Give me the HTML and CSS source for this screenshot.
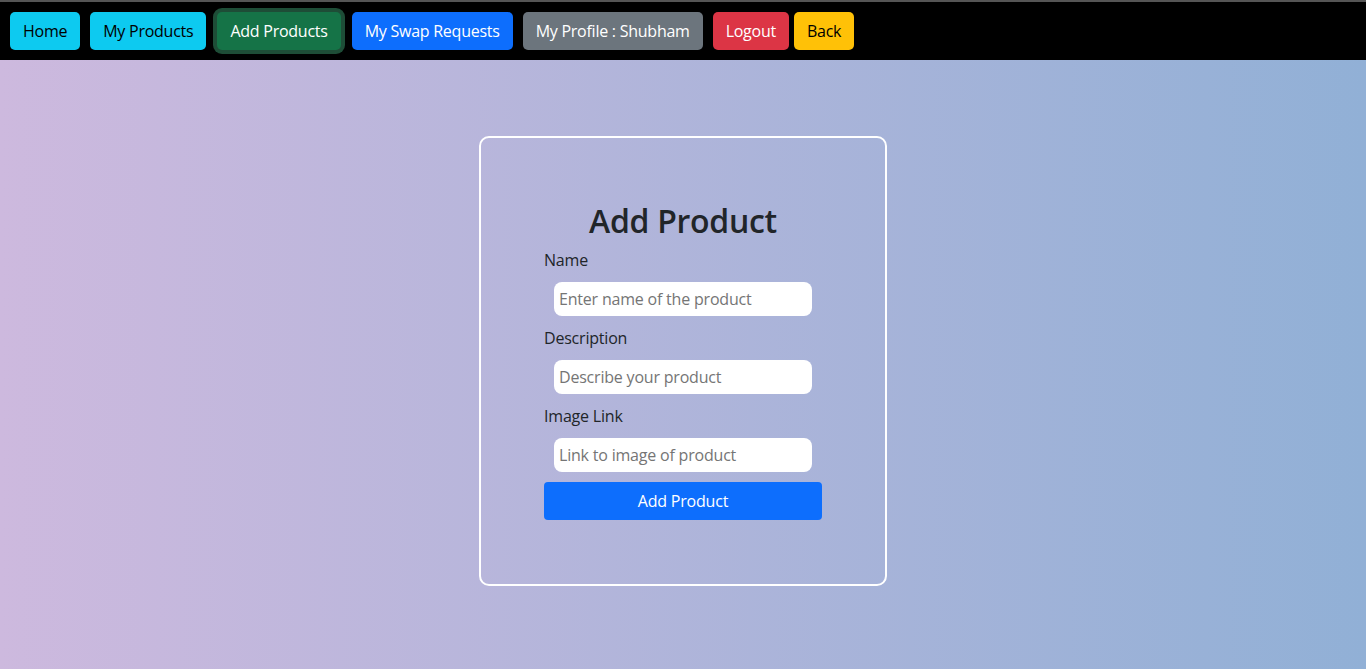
FILE: index.html
```html
<!DOCTYPE html>
<html lang="en">
<head>
<meta charset="utf-8">
<title>Add Product</title>
<link rel="stylesheet" href="styles.css">
</head>
<body>
<nav class="navbar">
  <a class="btn btn-info" href="#">Home</a>
  <a class="btn btn-info" href="#">My Products</a>
  <a class="btn btn-success active" href="#">Add Products</a>
  <a class="btn btn-primary" href="#">My Swap Requests</a>
  <a class="btn btn-secondary" href="#">My Profile : Shubham</a>
  <a class="btn btn-danger" href="#">Logout</a>
  <a class="btn btn-warning btn-tight" href="#">Back</a>
</nav>
<main class="page">
  <div class="card">
    <form class="form">
      <h1 class="title">Add Product</h1>
      <label class="label" for="name">Name</label>
      <input class="input" id="name" type="text" placeholder="Enter name of the product">
      <label class="label" for="desc">Description</label>
      <input class="input" id="desc" type="text" placeholder="Describe your product">
      <label class="label" for="img">Image Link</label>
      <input class="input" id="img" type="text" placeholder="Link to image of product">
      <button class="submit" type="button">Add Product</button>
    </form>
  </div>
</main>
</body>
</html>
```
FILE: styles.css
```css
* { box-sizing: border-box; }
html, body { margin: 0; padding: 0; height: 100%; }
body {
  font-family: "Open Sans", "Noto Sans", sans-serif;
  font-size: 16px;
  line-height: 24px;
  color: #212529;
  background: linear-gradient(90deg, #cdb9de 0%, #91b0d6 100%);
  display: flex;
  flex-direction: column;
}
.navbar {
  background: #000;
  border-top: 2px solid #555;
  height: 60px;
  padding: 10px 10px 0 10px;
  display: flex;
  align-items: flex-start;
  gap: 10px;
  flex-shrink: 0;
}
.btn {
  display: inline-block;
  padding: 6px 12px;
  border: 1px solid transparent;
  border-radius: 5px;
  font-size: 16px;
  line-height: 24px;
  letter-spacing: -0.25px;
  text-decoration: none;
  white-space: nowrap;
}
.btn-info { background: #0dcaf0; color: #000; }
.btn-success { background: #198754; color: #fff; }
.btn-success.active {
  background: #157347;
  box-shadow: 0 0 0 4px rgba(60, 153, 110, 0.5);
  margin: 0 1px 0 1px;
}
.btn-primary { background: #0d6efd; color: #fff; }
.btn-secondary { background: #6c757d; color: #fff; }
.btn-danger { background: #dc3545; color: #fff; }
.btn-warning { background: #ffc107; color: #000; }
.btn-tight { margin-left: -5px; }
.page {
  flex: 1;
  display: flex;
  justify-content: center;
  align-items: flex-start;
  padding-top: 76px;
}
.card {
  border: 2px solid #fff;
  border-radius: 10px;
  padding: 64px 63px 64px 63px;
}
.form {
  width: 278px;
  display: flex;
  flex-direction: column;
  align-items: flex-start;
}
.title {
  align-self: center;
  margin: 0 0 8px 0;
  font-size: 32px;
  line-height: 38px;
  font-weight: 600;
  letter-spacing: -0.3px;
  color: #212529;
}
.label {
  display: block;
  margin-bottom: 10px;
  letter-spacing: -0.2px;
}
.input {
  width: 258px;
  height: 34px;
  margin: 0 10px 10px 10px;
  padding: 0 5px;
  border: none;
  border-radius: 8px;
  background: #fff;
  font-family: inherit;
  font-size: 16px;
  letter-spacing: -0.2px;
  color: #212529;
  outline: none;
}
.input::placeholder { color: #757575; }
.submit {
  width: 278px;
  height: 38px;
  border: none;
  border-radius: 4px;
  background: #0d6efd;
  color: #fff;
  font-family: inherit;
  font-size: 16px;
  line-height: 24px;
  letter-spacing: -0.2px;
}
```
